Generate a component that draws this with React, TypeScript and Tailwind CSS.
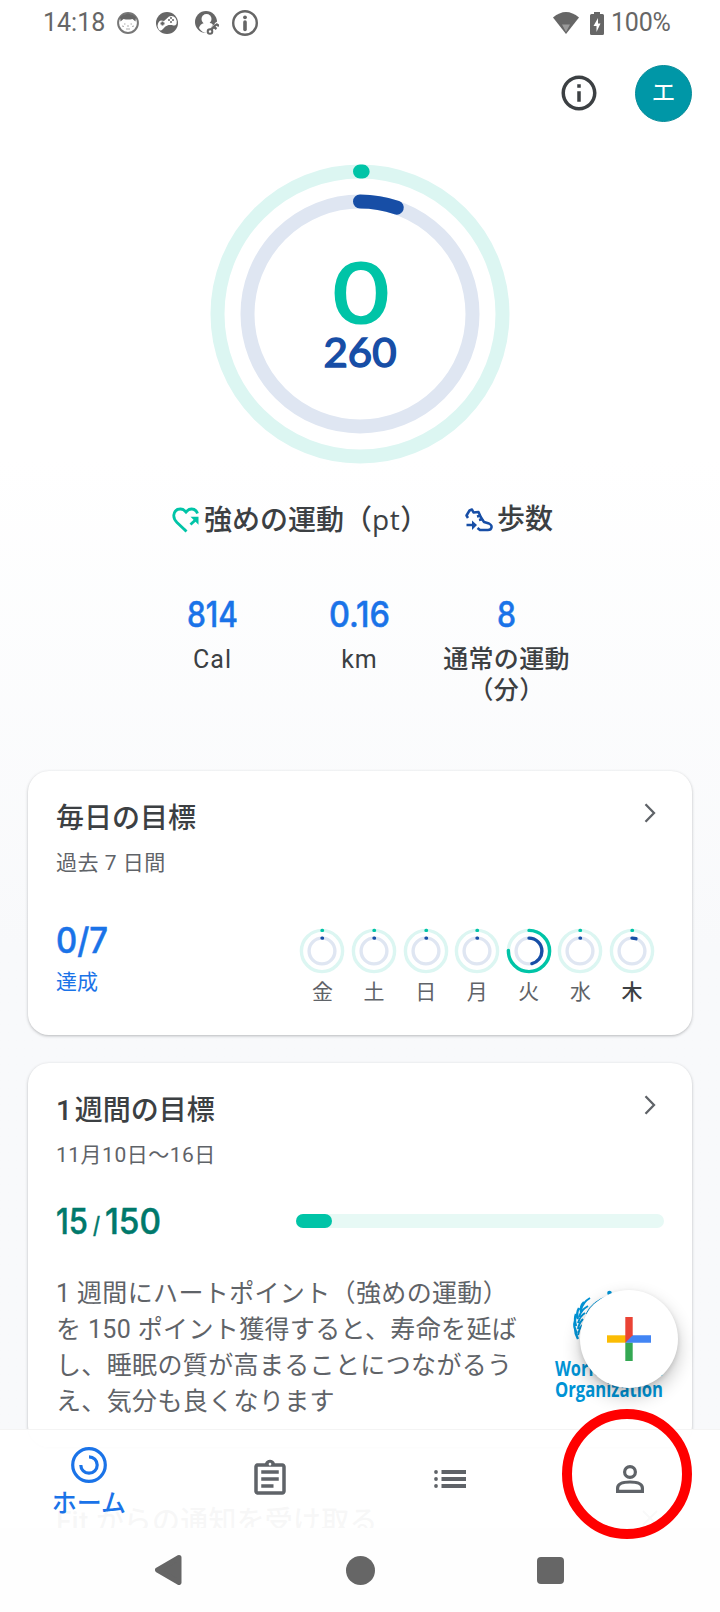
import { ReactNode } from "react";

const jp = "font-['Roboto','Noto_Sans_CJK_JP',sans-serif]";
const display = "font-['Inter','Noto_Sans_CJK_JP',sans-serif]";
const round = "font-['Lato','Noto_Sans_CJK_JP',sans-serif]";

const stats = [
  { value: "814", width: 51, label: "Cal" },
  { value: "0.16", width: 61, label: "km" },
  { value: "8", width: 19, label: "通常の運動（分）" },
];

const week = [
  { day: "金", points: 0, steps: 0 },
  { day: "土", points: 0, steps: 0 },
  { day: "日", points: 0, steps: 0 },
  { day: "月", points: 0, steps: 0 },
  { day: "火", points: 0.75, steps: 0.46 },
  { day: "水", points: 0, steps: 0 },
  { day: "木", points: 0, steps: 0.05, today: true },
];

type ArcProps = { c: number; r: number; width: number; value: number; color: string; track: string };

function Arc({ c, r, width, value, color, track }: ArcProps) {
  const length = 2 * Math.PI * r;
  const filled = Math.max(value * length, width * 0.15);
  return (
    <>
      <circle cx={c} cy={c} r={r} fill="none" stroke={track} strokeWidth={width} />
      <circle
        cx={c}
        cy={c}
        r={r}
        fill="none"
        stroke={color}
        strokeWidth={width}
        strokeLinecap="round"
        strokeDasharray={`${filled} ${length}`}
        transform={`rotate(-90 ${c} ${c})`}
      />
    </>
  );
}

type FigureProps = { text: string; width: number; size: number; className?: string };

function Figure({ text, width, size, className = "" }: FigureProps) {
  const h = Math.round(size * 0.76);
  return (
    <svg width={width} height={h} className={`overflow-visible ${display} ${className}`}>
      <text
        x="0"
        y={h - 0.5}
        fontSize={size}
        fontWeight="500"
        fill="currentColor"
        stroke="currentColor"
        strokeWidth="0.500"
        textLength={width}
        lengthAdjust="spacingAndGlyphs"
      >
        {text}
      </text>
    </svg>
  );
}

function StatusBar() {
  return (
    <div className="flex h-[46px] shrink-0 items-center pl-[43px] pr-[50px] text-[25px] leading-[46px] text-[#666]">
      <span className="w-[74px]">14:18</span>
      <svg width="22" height="22" viewBox="0 0 22 22" className="mr-[17px]">
        <circle cx="11" cy="11" r="9.9" fill="white" stroke="#777" strokeWidth="2" />
        <path d="M3 5Q11-2 19 5L18.500 9.500 15.500 7Q11 8 6.500 7L3.500 9.500z" fill="#666" />
        <path d="M7 12h1.500M13.500 12H15M10 14h2M5 14l2 .5M17 14l-2 .5M9 17h4" stroke="#aaa" strokeWidth="1" />
      </svg>
      <svg width="22" height="22" viewBox="0 0 22 22" className="mr-[17px]">
        <circle cx="11" cy="11" r="11" fill="#666" />
        <path d="M1.500 14Q2 9 5 8.500L8 9 13 4.500Q17 3 19.500 6 21.500 9 20.500 12 19 14.500 16 13L12.500 13Q9 14 7 17 4 20 2.500 17z" fill="white" />
        <path d="M6.500 9.500v4M4.500 11.500h4" stroke="#666" strokeWidth="1.800" />
        <g fill="#666">
          <circle cx="15" cy="6" r="1" />
          <circle cx="17" cy="8" r="1" />
          <circle cx="13" cy="8" r="1" />
          <circle cx="15" cy="10" r="1" />
        </g>
      </svg>
      <svg width="24" height="24" viewBox="0 0 24 24" className="mr-[13px]">
        <circle cx="11" cy="11" r="11" fill="#666" />
        <circle cx="11.500" cy="8" r="5" fill="white" />
        <path d="M4 17Q5 13 9 12h6q2 0 3 2l-6 8Q7 22 4 17z" fill="white" />
        <path d="M15 24L24 13" stroke="white" strokeWidth="7" />
        <circle cx="15" cy="20.500" r="2.300" fill="none" stroke="#666" strokeWidth="2" />
        <path d="M16.500 18.500L21 13.500M19 16l2.500 2M21 13l3 2" stroke="#666" strokeWidth="2.300" />
      </svg>
      <svg width="26" height="26" viewBox="0 0 26 26">
        <circle cx="13" cy="13" r="11.800" fill="none" stroke="#666" strokeWidth="2.400" />
        <path d="M13 12v7.500" stroke="#666" strokeWidth="3.600" strokeLinecap="round" />
        <circle cx="13" cy="7.300" r="1.900" fill="#666" />
      </svg>
      <svg width="26" height="22" viewBox="0 0 26 22" className="ml-auto mr-[11px]">
        <path d="M0 5.500Q13-5.500 26 5.500L13 22z" fill="#666" />
        <path d="M9 12.500h8L13 20z" fill="#999" />
      </svg>
      <svg width="14" height="23" viewBox="0 0 14 23" className="mr-[7px]">
        <path d="M4 0h6v2h2.500Q14 2 14 3.500v18Q14 23 12.500 23h-11Q0 23 0 21.500v-18Q0 2 1.500 2H4z" fill="#666" />
        <path d="M8 6L3.500 14H6.500v6L10.500 11.500H8z" fill="white" />
      </svg>
      <span className="w-[59px] tracking-[-0.2px]">100%</span>
    </div>
  );
}

function AppBar() {
  return (
    <div className="flex h-[94px] shrink-0 items-center justify-end pr-[28px]">
      <svg width="42" height="42" viewBox="0 0 24 24" fill="#3c4043" className="mr-[35px]">
        <path d="M11 7h2v2h-2zm0 4h2v6h-2zm1-9C6.480 2 2 6.480 2 12s4.480 10 10 10 10-4.480 10-10S17.520 2 12 2zm0 18c-4.410 0-8-3.590-8-8s3.590-8 8-8 8 3.590 8 8-3.590 8-8 8z" />
      </svg>
      <div className="flex size-[57px] items-center justify-center rounded-full border border-[#078c99] bg-[#0097a7] text-[24px] text-white">
        エ
      </div>
    </div>
  );
}

function Rings() {
  return (
    <svg width="300" height="300" viewBox="0 0 300 300" className="mx-auto mt-[24px] shrink-0">
      <Arc c={150} r={142.500} width={14} value={0.003} color="#00c4a7" track="#dcf6f2" />
      <Arc c={150} r={112.500} width={14} value={0.053} color="#174ea6" track="#dfe6f2" />
      <g className={round}>
        <text x="123" y="159" fontSize="83" fill="#00c4a7" stroke="#00c4a7" strokeWidth="2.200" textLength="56" lengthAdjust="spacingAndGlyphs">
          0
        </text>
        <text x="113.500" y="203" fontSize="41.500" fill="#174ea6" stroke="#174ea6" strokeWidth="1.500" textLength="73" lengthAdjust="spacingAndGlyphs">
          260
        </text>
      </g>
    </svg>
  );
}

function Legend() {
  return (
    <div className="mt-[35px] flex h-[42px] shrink-0 items-center pl-[172px] text-[28px] font-medium leading-[42px] text-[#3c4043]">
      <svg width="28" height="26" viewBox="0 0 28 26" fill="none" stroke="#00c4a7" strokeWidth="2.800" className="mr-[4px]">
        <path d="M14.500 22.500L13.500 23.500 5 15.500Q1.500 12 1.800 8.200 2.500 2 8.500 2 11.500 2 14 5 16.500 2 19.500 2q4.500 0 6 4.500" />
        <path d="M18.500 17.500L24 12.500" />
        <path d="M18.500 9.800h8v8z" fill="#00c4a7" stroke="none" />
      </svg>
      <span className="w-[261px] whitespace-nowrap">
        強めの運動（<span className="font-['Open_Sans','Noto_Sans',sans-serif] tracking-[0.500px]">pt</span>）
      </span>
      <svg width="28" height="24" viewBox="0 0 28 24" fill="none" stroke="#174ea6" strokeWidth="2.500" strokeLinejoin="round" className="mr-[4px]">
        <path d="M3 10L1.500 7.500 4.500 2.500 7 1.500 8.500 4.500 13.500 4 16 9.500 19 14 24 15.500Q27 17 26.500 19.500 26 22 23 22H15L12.500 20" />
        <path d="M12 8.500l4-1M14 12l4-1" />
        <path d="M1.500 17H8" />
        <path d="M7 12.500L12 17l-5 5z" fill="#174ea6" stroke="none" />
      </svg>
      <span>歩数</span>
    </div>
  );
}

function Stats() {
  return (
    <div className="mt-[59px] flex h-[171px] shrink-0 justify-center pr-[1px]">
      {stats.map((s) => (
        <div key={s.label} className="flex w-[147px] flex-col items-center text-[#3c4043]">
          <Figure text={s.value} width={s.width} size={35} className="text-[#1a73e8]" />
          <p className={`mt-[17px] w-[128px] text-center text-[25px] leading-[31px] ${s.label.length > 3 ? "font-medium tracking-[0.3px]" : "tracking-[1px]"}`}>
            {s.label}
          </p>
        </div>
      ))}
    </div>
  );
}

type CardProps = { title: string; subtitle: string; className: string; children: ReactNode };

function Card({ title, subtitle, className, children }: CardProps) {
  return (
    <section className={`mx-[28px] flex shrink-0 flex-col rounded-[21px] bg-white pl-[28px] pr-[28px] pt-[27px] shadow-[0_1px_3px_rgba(60,64,67,0.35)] ${className}`}>
      <div className="flex justify-between">
        <h2 className="text-[28px] font-medium leading-[42px] text-[#3c4043] [word-spacing:-4px]">{title}</h2>
        <svg width="12" height="20" viewBox="0 0 12 20" fill="none" stroke="#5f6368" strokeWidth="2.300" className="mr-[8px] mt-[5px]">
          <path d="M1.500 1.200L10 10 1.500 18.800" />
        </svg>
      </div>
      <p className="mt-[7px] text-[21px] leading-[32px] tracking-[0.500px] text-[#5f6368]">{subtitle}</p>
      {children}
    </section>
  );
}

function DailyGoals() {
  return (
    <Card title="毎日の目標" subtitle="過去 7 日間" className="h-[264px]">
      <div className="mt-[47px] flex justify-between pr-[9px]">
        <div className="text-[#1a73e8]">
          <Figure text="0/7" width={52} size={35} className="block" />
          <p className="mt-[13px] text-[21px] leading-[32px]">達成</p>
        </div>
        <div className="mt-[2px] flex gap-[5.600px]">
          {week.map((d) => (
            <div key={d.day} className="flex w-[46px] flex-col items-center">
              <svg width="46" height="46" viewBox="0 0 46 46">
                <Arc c={23} r={20.600} width={3.400} value={d.points} color="#00c4a7" track="#dcf6f2" />
                <Arc c={23} r={12.900} width={3.400} value={d.steps} color="#174ea6" track="#dfe6f2" />
              </svg>
              <span className={`mt-[2px] text-[21px] leading-[32px] ${d.today ? "font-medium text-[#3c4043]" : "text-[#5f6368]"}`}>{d.day}</span>
            </div>
          ))}
        </div>
      </div>
    </Card>
  );
}

function WhoLogo() {
  return (
    <svg width="110" height="120" viewBox="0 0 110 120" className="overflow-visible" fill="#0093d5">
      <g fill="none" stroke="#0093d5" strokeWidth="2.400">
        <path d="M30 12Q26 16 27 22M25 18Q22 23 24 29M22 24Q20 29 22 36M21 31Q19 37 23 43M21 38Q21 44 24 49" />
        <path d="M36 8Q29 12 27 20M34 16Q27 20 25 27M31 23Q26 26 24 33M29 29Q25 33 24 39M28 35Q25 39 24 45" strokeWidth="2" />
        <path d="M32 24Q38 11 54 6" strokeWidth="1" />
      </g>
      <circle cx="55.500" cy="3" r="2.300" />
      <g className="font-['Open_Sans','Noto_Sans',sans-serif]" fontWeight="700" fontSize="21">
        <text x="1" y="86" textLength="108" lengthAdjust="spacingAndGlyphs">
          World Health
        </text>
        <text x="1" y="107" textLength="108" lengthAdjust="spacingAndGlyphs">
          Organization
        </text>
      </g>
    </svg>
  );
}

function WeeklyGoal() {
  return (
    <Card title="1 週間の目標" subtitle="11月10日〜16日" className="mt-[28px] h-[384px]">
      <div className="mt-[36px] flex h-[27px] items-center justify-between text-[#00796b]">
        <div className="flex items-end">
          <Figure text="15" width={32} size={35} />
          <Figure text="/" width={7} size={23} className="mx-[5px]" />
          <Figure text="150" width={56} size={35} />
        </div>
        <div className="h-[14px] w-[368px] rounded-full bg-[#e7f9f5]">
          <div className="h-full w-[36px] rounded-full bg-[#00c4a7]" />
        </div>
      </div>
      <div className="mt-[42px] flex justify-between">
        <p className="w-[476px] whitespace-nowrap text-[25px] leading-[36px] tracking-[0.360px] text-[#5f6368]">
          1 週間にハートポイント（強めの運動）
          <br />を 150 ポイント獲得すると、寿命を延ば
          <br />
          し、睡眠の質が高まることにつながるう
          <br />
          え、気分も良くなります
        </p>
        <div className="mt-[14px]">
          <WhoLogo />
        </div>
      </div>
    </Card>
  );
}

function NotificationCard() {
  return (
    <section className="mx-[28px] mt-[28px] h-[200px] shrink-0 rounded-[21px] bg-white px-[28px] pt-[26px]">
      <div className="flex items-center justify-between text-[28px] font-medium leading-[42px] tracking-[0.200px] text-[#3c4043]">
        <h2>Fit からの通知を受け取る</h2>
        <svg width="16" height="16" viewBox="0 0 16 16" stroke="#5f6368" strokeWidth="2" className="mb-[8px] mr-[6px]">
          <path d="M1 1l14 14M15 1L1 15" />
        </svg>
      </div>
    </section>
  );
}

function AddButton() {
  return (
    <button className="absolute left-[580px] top-[1290px] flex size-[98px] items-center justify-center rounded-full bg-white shadow-[0_8px_18px_rgba(0,0,0,0.24),0_2px_5px_rgba(0,0,0,0.12)]">
      <svg width="44" height="44" viewBox="0 0 44 44">
        <path d="M18.300 25.500h7.400V44h-7.400z" fill="#34a853" />
        <path d="M0 18.300h20v7.400H0z" fill="#fbbc04" />
        <path d="M44 18.300H22l-3.700 7.400H44z" fill="#4285f4" />
        <path d="M18.300 0h7.400v18.300l-7.400 7.400z" fill="#ea4335" />
      </svg>
    </button>
  );
}

function TabBar() {
  return (
    <nav className="absolute inset-x-0 top-[1429px] grid h-[99px] grid-cols-4 border-t border-[#f4f4f4] bg-white/96 text-[#5f6368]">
      <div className="flex flex-col items-center pr-[2px] pt-[17px] text-[#1a73e8]">
        <svg width="36" height="36" viewBox="0 0 36 36" fill="none" stroke="#1a73e8" strokeWidth="3.200">
          <circle cx="18" cy="18" r="16.300" />
          <path d="M18 9.800A8.200 8.200 0 1 1 9.800 18" />
        </svg>
        <span className="mt-[2px] text-[25px] font-medium leading-[38px]">ホーム</span>
      </div>
      <div className="flex justify-center pt-[28px]">
        <svg width="42" height="42" viewBox="0 0 24 24" fill="currentColor">
          <path d="M7 15h7v2H7zm0-4h10v2H7zm0-4h10v2H7zm12-4h-4.180C14.400 1.840 13.300 1 12 1c-1.300 0-2.400.84-2.820 2H5c-.14 0-.27.010-.4.040-.39.080-.74.280-1.010.55-.18.180-.33.400-.43.640-.1.230-.16.490-.16.770v14c0 .27.060.54.160.78s.25.450.43.640c.27.270.62.470 1.010.55.130.020.260.030.400.030h14c1.100 0 2-.9 2-2V5c0-1.100-.9-2-2-2zm-7-.25c.41 0 .75.340.75.750s-.34.750-.75.750-.75-.34-.75-.75.340-.75.750-.75zM19 19H5V5h14v14z" />
        </svg>
      </div>
      <div className="flex justify-center pt-[40px]">
        <svg width="32" height="18" viewBox="0 0 32 18" fill="currentColor">
          <path d="M7.500 0H32v4H7.500zM7.500 7H32v4H7.500zM7.500 14H32v4H7.500z" />
          <circle cx="2" cy="2" r="1.900" />
          <circle cx="2" cy="9" r="1.900" />
          <circle cx="2" cy="16" r="1.900" />
        </svg>
      </div>
      <div className="flex justify-center pt-[35px]">
        <svg width="28" height="28" viewBox="0 0 28 28" fill="none" stroke="currentColor" strokeWidth="3.200">
          <circle cx="14" cy="7" r="5.400" />
          <path d="M1.600 26.400V23Q1.800 17 14 17T26.400 23v3.400z" />
        </svg>
      </div>
    </nav>
  );
}

function SystemBar() {
  return (
    <div className="flex h-[84px] shrink-0 items-center bg-[#fefefe] pl-[155px]">
      <svg width="28" height="30" viewBox="0 0 28 30">
        <path d="M24 2.500L2.500 15 24 27.500z" fill="#666" stroke="#666" strokeWidth="5" strokeLinejoin="round" />
      </svg>
      <div className="ml-[163px] size-[29px] rounded-full bg-[#666]" />
      <div className="ml-[162px] size-[27px] rounded-[4px] bg-[#666]" />
    </div>
  );
}

export default function App() {
  return (
    <div className={`relative flex h-[1612px] w-[720px] flex-col overflow-hidden bg-white ${jp}`}>
      <main className="flex min-h-0 flex-1 flex-col overflow-hidden bg-linear-to-b from-white from-[30%] to-[#f8f9fb] to-[62%]">
        <StatusBar />
        <AppBar />
        <Rings />
        <Legend />
        <Stats />
        <DailyGoals />
        <WeeklyGoal />
        <NotificationCard />
      </main>
      <AddButton />
      <TabBar />
      <SystemBar />
      <div className="absolute left-[562px] top-[1409px] size-[130px] rounded-full border-10 border-[#ff0000]" />
    </div>
  );
}
